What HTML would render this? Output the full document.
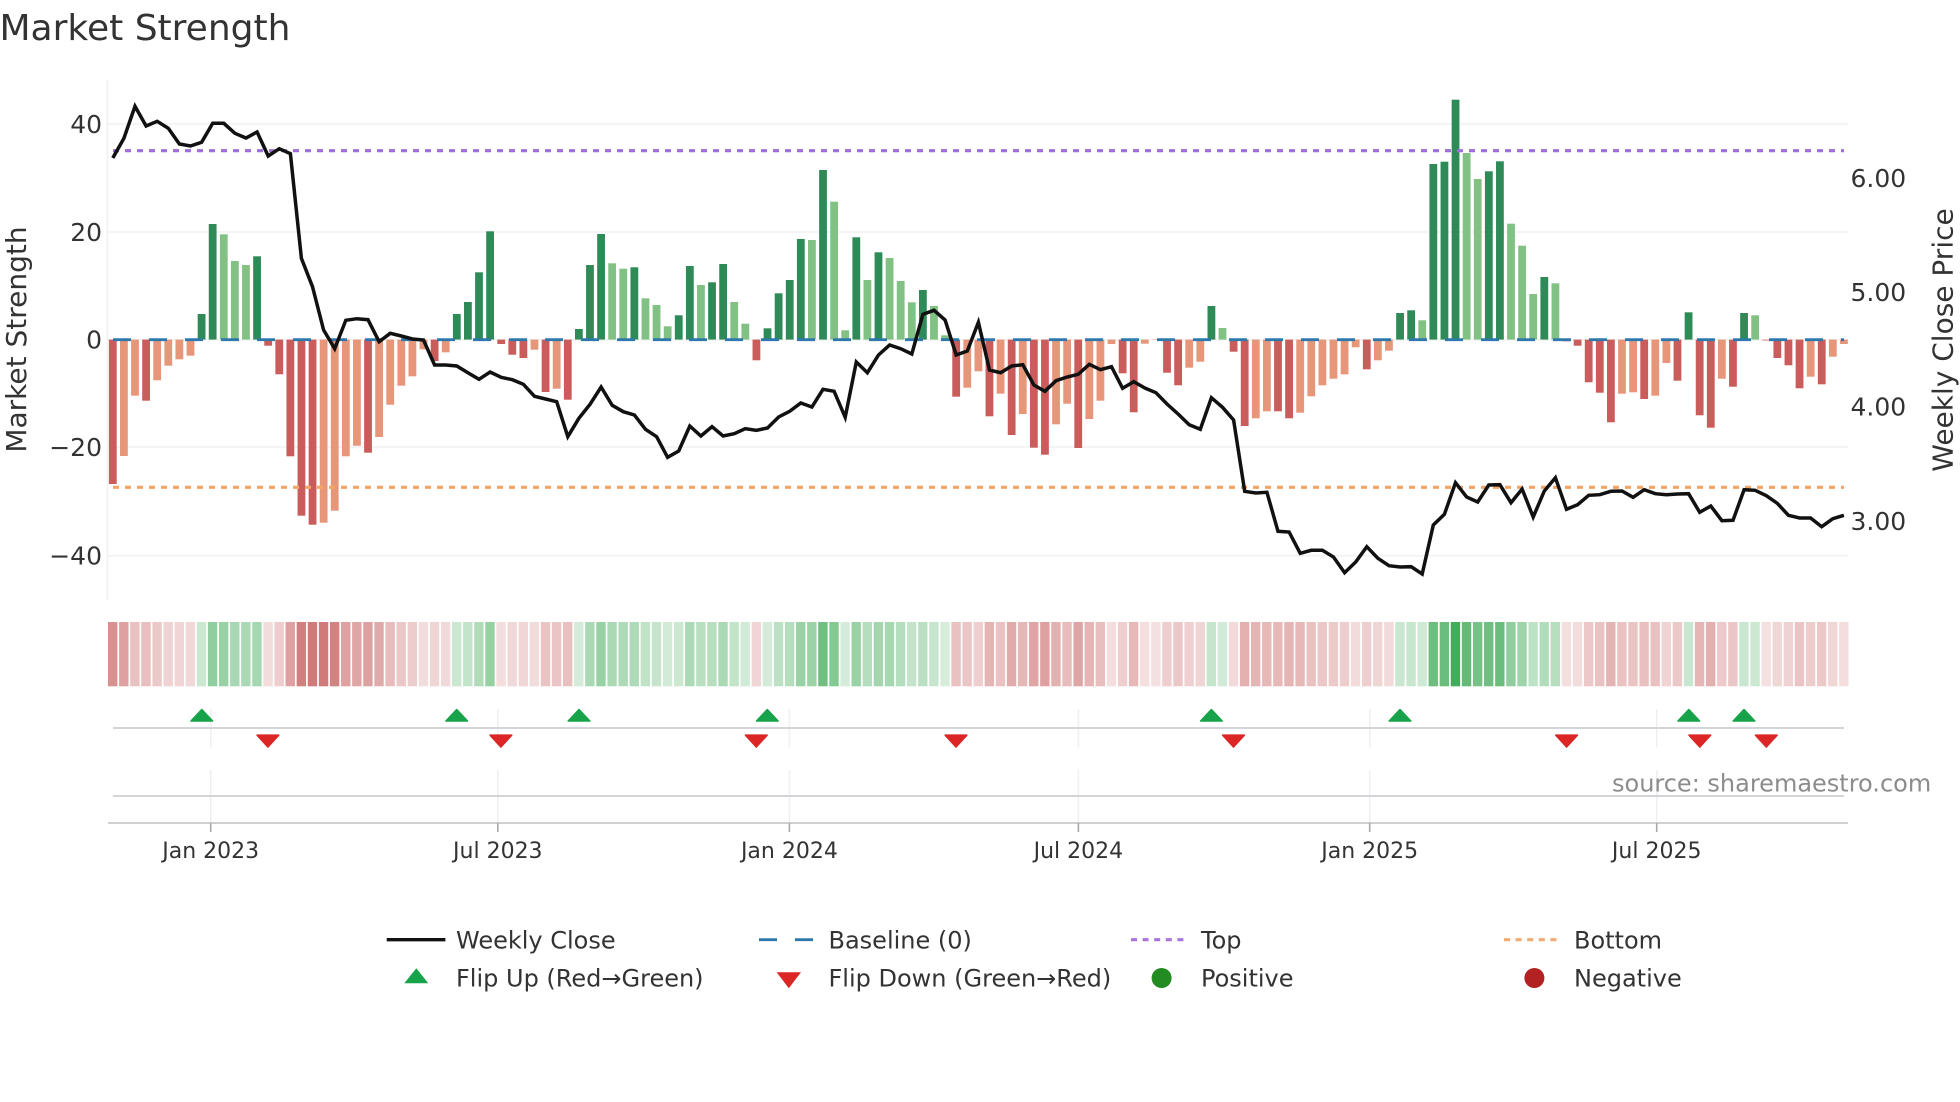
<!DOCTYPE html>
<html lang="en">
<head>
<meta charset="utf-8">
<title>Market Strength</title>
<style>
html,body{margin:0;padding:0;background:#fff;width:1960px;height:1102px;overflow:hidden}
svg{display:block}
text{font-family:"DejaVu Sans","Liberation Sans",sans-serif;fill:#333}
.yt{font-size:25px;text-anchor:end}
.yr{font-size:25px}
.xt{font-size:22px;text-anchor:middle}
.at{font-size:28px;text-anchor:middle}
.lg{font-size:24px}
</style>
</head>
<body>
<svg xmlns="http://www.w3.org/2000/svg" width="1960" height="1102" viewBox="0 0 1960 1102">
<rect width="1960" height="1102" fill="#fff"/>
<text x="-0.5" y="40" font-size="36">Market Strength</text>

<g stroke="#f1f1f1" stroke-width="1.6">
<line x1="108" x2="1848" y1="124" y2="124"/>
<line x1="108" x2="1848" y1="232" y2="232"/>
<line x1="108" x2="1848" y1="339.7" y2="339.7"/>
<line x1="108" x2="1848" y1="447" y2="447"/>
<line x1="108" x2="1848" y1="555.7" y2="555.7"/>
<line x1="107.5" x2="107.5" y1="80" y2="600"/>
</g>

<g id="bars"></g>
<line x1="113" x2="1844" y1="339.7" y2="339.7" stroke="#2f78ab" stroke-width="2.9" stroke-dasharray="18 18"/>
<line x1="113" x2="1844" y1="150.7" y2="150.7" stroke="#9d6fd8" stroke-width="3.1" stroke-dasharray="6 6"/>
<line x1="113" x2="1844" y1="487.3" y2="487.3" stroke="#f2a566" stroke-width="3.1" stroke-dasharray="6 6"/>
<path id="close" fill="none" stroke="#111" stroke-width="3.5" stroke-linejoin="miter" d=""/>

<text class="yt" x="102" y="133">40</text>
<text class="yt" x="102" y="241">20</text>
<text class="yt" x="102" y="348.7">0</text>
<text class="yt" x="102" y="456">−20</text>
<text class="yt" x="102" y="564.7">−40</text>
<text class="yr" x="1850.5" y="187">6.00</text>
<text class="yr" x="1850.5" y="301">5.00</text>
<text class="yr" x="1850.5" y="415.5">4.00</text>
<text class="yr" x="1850.5" y="530">3.00</text>
<text class="at" transform="translate(26 339.5) rotate(-90)">Market Strength</text>
<text class="at" transform="translate(1952.6 340) rotate(-90)">Weekly Close Price</text>

<g id="heat"></g>

<g stroke="#eef0f2" stroke-width="1.6">
<path d="M210.7 709.3V747.7M210.7 770V822M497.8 709.3V747.7M497.8 770V822M789.4 709.3V747.7M789.4 770V822M1078.4 709.3V747.7M1078.4 770V822M1369.7 709.3V747.7M1369.7 770V822M1656.7 709.3V747.7M1656.7 770V822"/>
</g>
<line x1="113" x2="1844" y1="728" y2="728" stroke="#d3d5d8" stroke-width="2"/>
<line x1="113" x2="1844" y1="796" y2="796" stroke="#d3d5d8" stroke-width="2"/>
<line x1="108" x2="1848" y1="823" y2="823" stroke="#cfd0d2" stroke-width="2"/>
<path stroke="#a8a8a8" stroke-width="1.6" fill="none" d="M210.7 823V832M497.8 823V832M789.4 823V832M1078.4 823V832M1369.7 823V832M1656.7 823V832"/>

<g fill="#16a34a" stroke="#16a34a" stroke-width="1.6" stroke-linejoin="round">
<path d="M201.8 709.6L212.6 721H191Z"/>
<path d="M456.7 709.6L467.5 721H445.9Z"/>
<path d="M579 709.6L589.8 721H568.2Z"/>
<path d="M767.3 709.6L778.1 721H756.5Z"/>
<path d="M1211.4 709.6L1222.2 721H1200.6Z"/>
<path d="M1400 709.6L1410.8 721H1389.2Z"/>
<path d="M1688.8 709.6L1699.6 721H1678Z"/>
<path d="M1744 709.6L1754.8 721H1733.2Z"/>
</g>
<g fill="#dc2626" stroke="#dc2626" stroke-width="1.6" stroke-linejoin="round">
<path d="M267.9 747L278.7 735.2H257.1Z"/>
<path d="M500.9 747L511.7 735.2H490.1Z"/>
<path d="M756.3 747L767.1 735.2H745.5Z"/>
<path d="M956 747L966.8 735.2H945.2Z"/>
<path d="M1233.5 747L1244.3 735.2H1222.7Z"/>
<path d="M1566.6 747L1577.4 735.2H1555.8Z"/>
<path d="M1699.8 747L1710.6 735.2H1689Z"/>
<path d="M1766.3 747L1777.1 735.2H1755.5Z"/>
</g>

<text class="xt" x="210.7" y="858">Jan 2023</text>
<text class="xt" x="497.8" y="858">Jul 2023</text>
<text class="xt" x="789.4" y="858">Jan 2024</text>
<text class="xt" x="1078.4" y="858">Jul 2024</text>
<text class="xt" x="1369.7" y="858">Jan 2025</text>
<text class="xt" x="1656.7" y="858">Jul 2025</text>

<text x="1612" y="791.7" font-size="24" style="fill:#8c8c8c">source: sharemaestro.com</text>

<line x1="386.7" x2="445.4" y1="939.7" y2="939.7" stroke="#111" stroke-width="3.4"/>
<text class="lg" x="456" y="948.5">Weekly Close</text>
<path d="M759 939.7H777M795 939.7H813" stroke="#2f78ab" stroke-width="2.9" fill="none"/>
<text class="lg" x="828.5" y="948.5">Baseline (0)</text>
<line x1="1131" x2="1186" y1="939.7" y2="939.7" stroke="#a874e0" stroke-width="3.2" stroke-dasharray="6 5.6"/>
<text class="lg" x="1201" y="948.5">Top</text>
<line x1="1504" x2="1559" y1="939.7" y2="939.7" stroke="#f2ab70" stroke-width="3.2" stroke-dasharray="6 5.6"/>
<text class="lg" x="1574" y="948.5">Bottom</text>

<path d="M416.3 968.3L428.3 983.3H404.3Z" fill="#16a34a"/>
<text class="lg" x="456" y="986.5">Flip Up (Red→Green)</text>
<path d="M788.8 988.3L801 972.3H776.6Z" fill="#dc2626"/>
<text class="lg" x="828.5" y="986.5">Flip Down (Green→Red)</text>
<ellipse cx="1161.6" cy="978" rx="10" ry="10" fill="#228b22"/>
<text class="lg" x="1201" y="986.5">Positive</text>
<ellipse cx="1534.4" cy="978" rx="10" ry="10" fill="#b22222"/>
<text class="lg" x="1574" y="986.5">Negative</text>
</svg>
<script>
(function(){
var Y=[484,456,395.7,400.7,380.3,365.7,359.3,355.7,314,224,
234.3,261,265,256.3,345.7,374.3,456.3,515.7,524.7,522.7,
510.7,456.3,445.7,452.7,437,404.7,385.7,376.3,349.3,361,
352.3,314,302,272.3,231.3,344,354.7,358,349.7,392,
388.7,399.7,329,265,234,263.3,268.7,267.3,298.3,305,
326.3,315.3,266,285,282.3,264,302,323.7,360.3,328.3,
293.3,280,239,240,170,201.7,330.3,237.3,280,252.3,
258,281,302.3,290,306,335.3,396.7,387.7,371.3,416.3,
393.7,435,414,447.7,454.7,424.3,403.7,448,419,400.7,
344,373.3,412.3,343.7,340,372.7,385.3,367.7,361.7,306,
328,351.7,426,418.3,411.3,411.3,418.3,412.7,396.3,385.3,
378.7,374.3,347.3,369.3,360.3,350.7,313,310.3,320.3,164,
161.7,99.7,153,179,171.3,161.3,223.7,245.7,294,277,
283.3,341.3,345.7,382.3,392.7,422.3,393.7,392.3,399,395.7,
363,380.7,312.3,415.3,427.7,378.7,386.7,313,315.3,340.7,
358,365.3,388.3,376.7,384.3,356.7,344];
var K="dlldlllldd"+"lllddddddl"+"llldllllld"+"ldddddddld"+"lddddlldll"+"lddlddlldd"+"dddldlldld"+"llldlldlld"+"ldlddlldll"+"lddllddlld"+"lddllddlll"+"llldllddld"+"ddllddllld"+"ldddddlldl"+"lddddlddll"+"dddldll";
var L=[158,138.3,106.3,126,121.3,128.3,144,146,142.3,123.3,
123.3,133.3,138,132,156,148.7,153.7,258.3,286.7,330,
348.7,320.3,318.7,319.7,341.7,333.3,336,339,340,365,
365,366,372.7,379.3,372,377.3,379.7,384.3,396.3,399,
401.7,436.7,418.3,404.3,387,405.3,411.7,415,429.3,436.7,
457.3,451,426,436,426.7,436,433.7,428.7,430.3,428,
417,411.3,403,407,389.3,391.3,417.3,362,372.7,355,
345,348.7,354,314.3,310.3,320,355,351,322.3,370,
372.7,366,364.7,385,391.3,380.7,377,374.3,364.3,369.7,
366.7,388.3,381.7,388,392.7,404,414,424.7,429.3,397.7,
407.3,420,491.3,493,492.3,531.3,532,553.3,550.3,550.3,
557,572.7,562,546.7,558.3,565.7,567,566.7,574,525,
514.3,482.7,497,502,485,484.7,502.7,489,517,491,
477.7,509.3,504.7,495.3,494.7,491.3,491,497.3,489.7,493.7,
494.7,494,493.7,512.3,506,520.7,520.3,489.7,490.3,495.7,
503.3,515.3,518,518,526.7,518.7,515.3];
var NS="http://www.w3.org/2000/svg",b=document.getElementById("bars"),h=document.getElementById("heat");
function rect(p,x,y,w,hh,f,o){var r=document.createElementNS(NS,"rect");r.setAttribute("x",x.toFixed(2));r.setAttribute("y",y.toFixed(2));r.setAttribute("width",w);r.setAttribute("height",Math.max(hh,0).toFixed(2));r.setAttribute("fill",f);if(o!==undefined)r.setAttribute("fill-opacity",o.toFixed(3));p.appendChild(r);}
var base=339.6,step=11.097,d="";
for(var i=0;i<157;i++){
  var c=112.8+step*i,y=Y[i],pos=y<base,k=K.charAt(i);
  var col=pos?(k=="d"?"#2e8b57":"#82c184"):(k=="d"?"#cb5c5c":"#e7967a");
  if(pos)rect(b,c-3.9,y,7.8,base-y,col);else rect(b,c-3.9,base,7.8,y-base,col);
  var v=Math.abs(base-y)/5.39;
  if(pos)rect(h,108+step*i,622,9.4,64.3,"#169732",0.16+0.0145*v);
  else rect(h,108+step*i,622,9.4,64.3,"#b22222",0.14+0.0135*v);
  d+=(i?"L":"M")+c.toFixed(1)+" "+L[i];
}
document.getElementById("close").setAttribute("d",d);
})();
</script>
</body>
</html>
